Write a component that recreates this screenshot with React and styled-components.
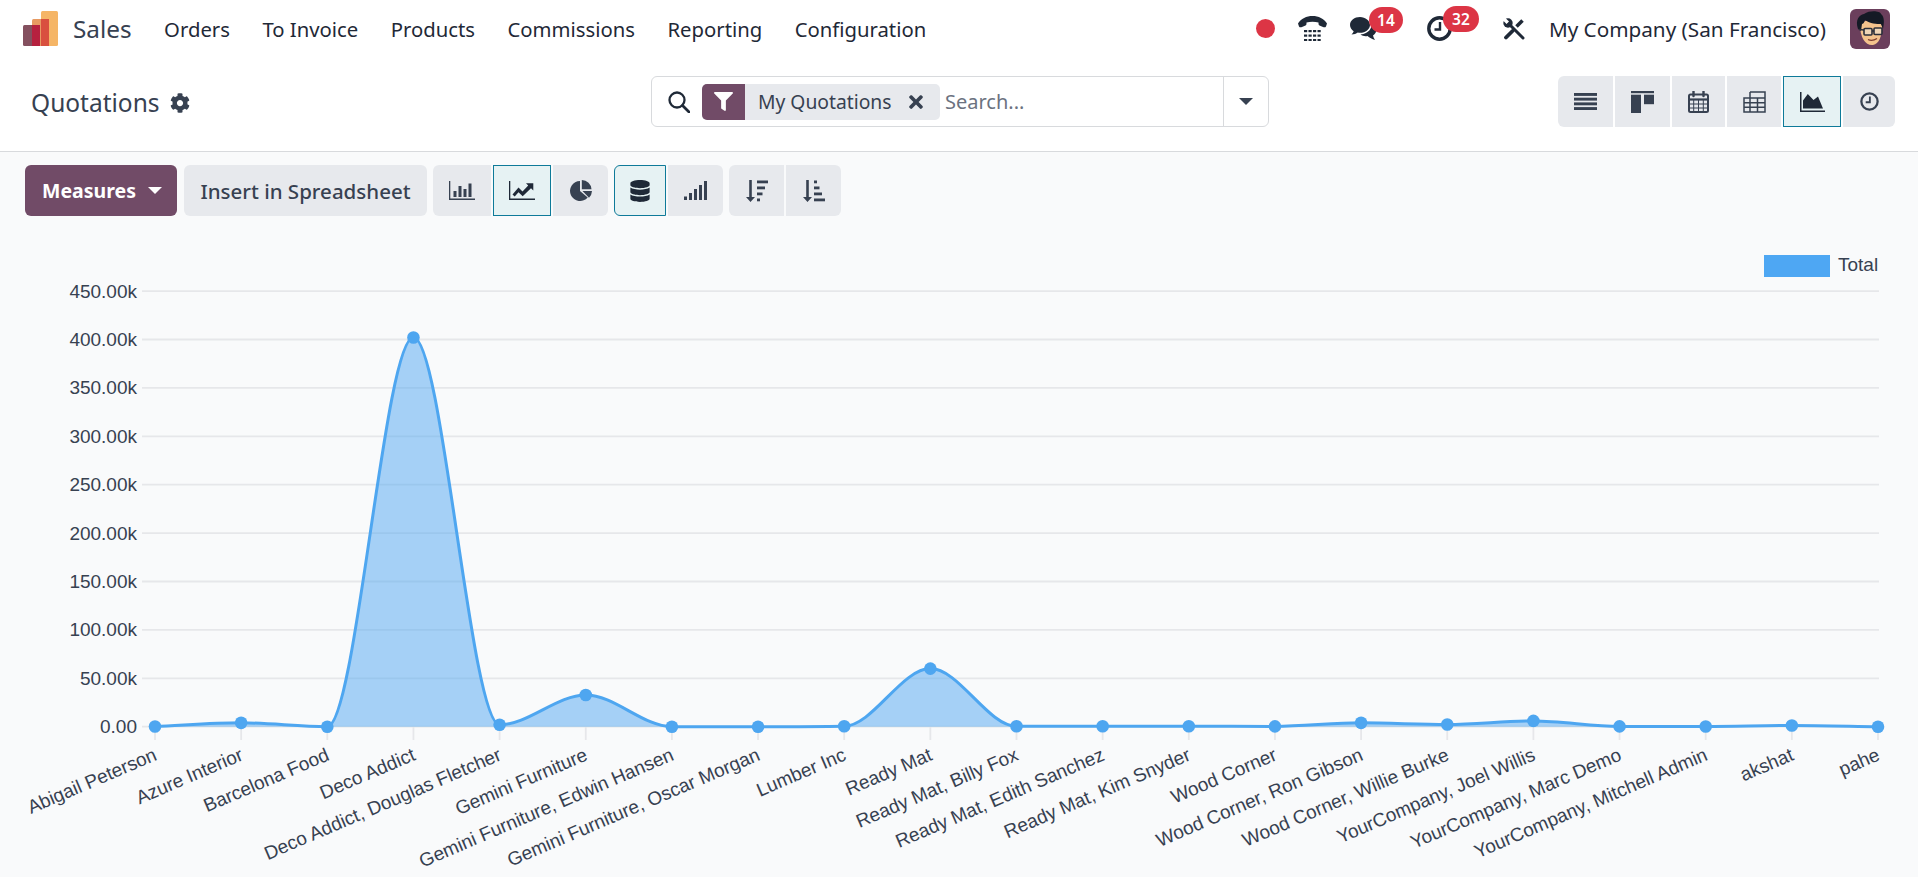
import React from "react";
import styled, { createGlobalStyle } from "styled-components";
import { FaDatabase, FaFilter, FaTimes, FaCog } from "react-icons/fa";

const Global = createGlobalStyle`
  html, body { margin: 0; padding: 0; height: 100%; overflow: hidden; background: #f9fafb; }
  #root { height: 100%; }
  * { box-sizing: border-box; }
`;

const Page = styled.div`
  width: 1918px; height: 877px; display: flex; flex-direction: column; overflow: hidden;
  font-family: "Noto Sans", "Open Sans", sans-serif; color: #374151; background: #f9fafb;
`;
const Navbar = styled.header`
  height: 57px; background: #fff; display: flex; align-items: center; justify-content: space-between;
  padding: 0 28px 0 23px; flex: none;
`;
const NavLeft = styled.nav`display: flex; align-items: center; gap: 32.5px;`;
const Brand = styled.div`display: flex; align-items: center; gap: 15px;`;
const BrandName = styled.span`font-size: 24.3px; color: #374151; line-height: 1; padding-top: 1px;`;
const NavLink = styled.a`font-size: 20.3px; color: #1f2937; line-height: 1; padding-top: 2px;`;
const NavRight = styled.div`display: flex; align-items: center;`;
const Slot = styled.div`
  position: relative; display: flex; align-items: center; margin-left: ${p => p.$ml || 0}px; color: #1f2937;
`;
const Badge = styled.span`
  position: absolute; left: ${p => p.$left}px; top: -10px; width: ${p => p.$w}px; height: 26px; border-radius: 13px;
  background: #dc3545; color: #fff; font-size: 15.5px; font-weight: 600; display: flex; align-items: center; justify-content: center;
`;
const Dot = styled.span`width: 19px; height: 19px; border-radius: 50%; background: #dc3545;`;
const CompanyName = styled.span`font-size: 20.7px; color: #1f2937; margin-left: 24px; line-height: 1; padding-top: 2px; white-space: nowrap;`;

const ControlPanel = styled.section`
  height: 95px; background: #fff; border-bottom: 1px solid #d8dadd; flex: none;
  display: grid; grid-template-columns: 620px 618px 1fr; align-items: start; padding: 19px 23px 0 31px;
`;
const Title = styled.div`display: flex; align-items: center; gap: 10px; height: 53px; font-size: 24.5px; color: #374151;`;
const SearchBox = styled.div`
  height: 51px; border: 1px solid #d8dadd; border-radius: 6px; display: flex; align-items: center; background: #fff;
`;
const SearchGlyph = styled.span`display: flex; width: 50px; justify-content: center; padding-left: 4px; color: #1f2937;`;
const Facet = styled.div`
  height: 36px; width: 238px; border-radius: 5px; background: #e7e9ed; display: flex; align-items: center; overflow: hidden; flex: none;
`;
const FacetIcon = styled.span`
  width: 43px; height: 36px; background: #714b67; color: #fff; display: flex; align-items: center; justify-content: center; flex: none;
`;
const FacetLabel = styled.span`font-size: 19.3px; color: #374151; margin-left: 13px; flex: 1; line-height: 1;`;
const FacetClose = styled.span`display: flex; margin-right: 14px; color: #374151;`;
const Placeholder = styled.span`flex: 1; margin-left: 5px; font-size: 20px; color: #6b7280; line-height: 1;`;
const DropToggle = styled.div`
  width: 45px; height: 49px; border-left: 1px solid #d8dadd; display: flex; align-items: center; justify-content: center; flex: none;
`;
const Caret = styled.span`
  display: block; width: 0; height: 0; border-left: 7px solid transparent; border-right: 7px solid transparent;
  border-top: 7px solid ${p => p.$color || "#374151"}; margin-left: ${p => p.$ml || 0}px;
`;
const Switcher = styled.div`display: flex; justify-content: flex-end; gap: 2px;`;
const Group = styled.div`display: flex; gap: 2px; margin-right: ${p => p.$mr ?? 6}px;`;
const IconBtn = styled.button`
  width: ${p => p.$w}px; height: 51px; padding: 0; margin: 0; display: flex; align-items: center; justify-content: center;
  background: ${p => (p.$active ? "#e6f2f3" : "#e7e9ed")};
  border: ${p => (p.$active ? "1.5px solid #0e7a99" : "none")};
  color: ${p => (p.$active ? "#1f2937" : "#374151")};
  border-radius: 0;
  &:first-child { border-top-left-radius: 6px; border-bottom-left-radius: 6px; }
  &:last-child { border-top-right-radius: 6px; border-bottom-right-radius: 6px; }
`;

const Content = styled.main`flex: 1; background: #f9fafb; min-height: 0;`;
const Toolbar = styled.div`display: flex; padding: 13px 25px 0; height: 64px; align-items: flex-start;`;
const MeasuresBtn = styled.button`
  width: 152px; height: 51px; background: #714b67; border: none; border-radius: 6px; color: #fff;
  font: 700 19.5px "Noto Sans", sans-serif; display: flex; align-items: center; padding: 0 0 0 17px; margin-right: 7px;
`;
const SheetBtn = styled.button`
  width: 243px; height: 51px; background: #e7e9ed; border: none; border-radius: 6px; color: #374151;
  font: 500 20.5px "Noto Sans", sans-serif; padding: 0; margin-right: 6px;
`;
const ChartSvg = styled.svg`display: block; width: 1918px; height: 661px;`;
const AxisText = styled.text`font: 19px "Liberation Sans", Arial, sans-serif; fill: #374151;`;

/* ---------- drawn icons ---------- */
const Logo = () => (
  <svg width="35" height="35" viewBox="0 0 35 35">
    <rect x="18" y="0" width="17" height="35" rx="1.5" fill="#f5b566" />
    <rect x="9" y="8" width="17" height="27" rx="1.5" fill="#e79a62" />
    <rect x="18" y="8" width="8" height="27" fill="#d9503f" />
    <rect x="0" y="14" width="17" height="21" rx="1.5" fill="#84505f" />
    <rect x="9" y="14" width="8" height="21" fill="#b6213f" />
  </svg>
);
const SearchIcon = () => (
  <svg width="22" height="22" viewBox="0 0 22 22" fill="none" stroke="currentColor">
    <circle cx="9" cy="9" r="7.500" strokeWidth="2.300" />
    <path d="M14.500 14.500L21 21" strokeWidth="2.800" strokeLinecap="round" />
  </svg>
);
const Phone = () => (
  <svg width="29" height="25" viewBox="0 0 29 25" fill="currentColor">
    <path d="M0 7.5C3 2.5 8.5 0 14.5 0S26 2.5 29 7.500L28 10.500C27.500 11.500 26 11.500 25 11L21.500 9.500C20.500 9 20.500 8 20.500 6.500C17 5.500 12 5.500 8.500 6.500C8.500 8 8.500 9 7.500 9.500L4 11C3 11.500 1.500 11.500 1 10.500Z" />
    {[14, 18.5, 23].map(y =>
      [6, 10.500, 15, 19.500].map(x => <rect key={x + "-" + y} x={x} y={y} width="3.2" height="2.200" />)
    )}
  </svg>
);
const Chat = () => (
  <svg width="27" height="23" viewBox="0 0 27 23" fill="currentColor">
    <path d="M10 0C4.500 0 0 3.500 0 8C0 10.500 1.500 12.700 3.700 14.200C3.300 15.500 2.500 16.500 1.500 17.500C4 17.500 6.300 16.500 7.800 15.500C8.500 15.700 9.300 15.800 10 15.800C15.500 15.800 20 12.300 20 8S15.500 0 10 0Z" />
    <path d="M21.500 7C22 11 19 16.500 10.500 17.500C12.500 19 15 19.500 17.500 19C19.500 20.800 22 22 25 23C24 21.500 23.300 20 23 18.500C25.300 17 26.500 15 26.500 12.800C26.500 10.500 24.500 8 21.500 7Z" />
  </svg>
);
const Clock = ({ size = 25, sw = 3.4 }) => (
  <svg width={size} height={size} viewBox="0 0 25 25" fill="none" stroke="currentColor">
    <circle cx="12.5" cy="12.500" r="10.700" strokeWidth={sw} />
    <path d="M13 6V13.500H7.500" strokeWidth="2.400" />
  </svg>
);
const Tools = () => (
  <svg width="22" height="22" viewBox="0 0 22 22">
    <path d="M3 19.500L9.500 13" stroke="currentColor" strokeWidth="3.800" strokeLinecap="round" />
    <path d="M13.500 8.500L19.500 2.500" stroke="currentColor" strokeWidth="3.600" />
    <circle cx="5" cy="5" r="4.700" fill="currentColor" />
    <path d="M0.500 0.500L4.800 4.800" stroke="#fff" strokeWidth="3.400" />
    <path d="M6 6L20 20" stroke="currentColor" strokeWidth="3" strokeLinecap="round" />
  </svg>
);
const Avatar = () => (
  <svg width="40" height="40" viewBox="0 0 40 40">
    <rect width="40" height="40" rx="6" fill="#6b3f5c" />
    <path d="M10 16C10 29 16 37 23 36C29 35 32 27 32 17C30 11 14 9 10 16Z" fill="#f4c38d" />
    <path d="M8 20C5 11 9 6 14 5C20 1 30 2 31 5C35 8 34 15 33 20L31 15C27 15 20 15 15 11C14 14 13 15 12 15L11 22Z" fill="#141a25" />
    <rect x="14" y="19.500" width="8" height="6.500" rx="1" fill="#e9e4d8" fillOpacity=".55" stroke="#2b2f3a" strokeWidth="1.600" />
    <rect x="24" y="19" width="8" height="6.500" rx="1" fill="#e9e4d8" fillOpacity=".55" stroke="#2b2f3a" strokeWidth="1.600" />
    <path d="M22 22H24M9 20.500L14 21" stroke="#2b2f3a" strokeWidth="1.500" />
    <path d="M18 30.500C21 32 24 31.500 27 29.500" stroke="#7a3c2f" strokeWidth="1.300" fill="none" />
  </svg>
);
const ListIcon = () => (
  <svg width="23" height="17" viewBox="0 0 23 17" fill="currentColor">
    {[0, 4.700, 9.400, 14.100].map(y => <rect key={y} y={y} width="23" height="2.900" />)}
  </svg>
);
const KanbanIcon = () => (
  <svg width="23" height="22" viewBox="0 0 23 22" fill="currentColor">
    <rect width="23" height="2.200" /><rect y="3.700" width="10" height="18.300" /><rect x="13" y="3.700" width="10" height="9.500" />
  </svg>
);
const CalendarIcon = () => (
  <svg width="21" height="22" viewBox="0 0 21 22" fill="none" stroke="currentColor">
    <rect x="1" y="3.500" width="19" height="17.500" rx="1.500" strokeWidth="2" />
    <path d="M1 8.500H20" strokeWidth="2.200" />
    <path d="M1 13H20M1 17H20M5.700 8.500V21M10.500 8.500V21M15.300 8.500V21" strokeWidth="1" />
    <path d="M5.500 0.500V5M15.500 0.500V5" strokeWidth="2.400" strokeLinecap="round" />
  </svg>
);
const TableIcon = () => (
  <svg width="23" height="22" viewBox="0 0 23 22" fill="none" stroke="currentColor" strokeWidth="1.500">
    <path d="M7 1H22V21H1V7H22M1 11.700H22M1 16.300H22M7 1V21M14.500 7V21" />
  </svg>
);
const AreaIcon = () => (
  <svg width="25" height="20" viewBox="0 0 25 20" fill="currentColor">
    <path d="M0 0H1.500V18.500H25V20H0Z" />
    <path d="M3 16.500V8.500L7.800 2L13.500 8L18 4.500L23 16.500Z" />
  </svg>
);
const BarIcon = () => (
  <svg width="26" height="19" viewBox="0 0 26 19" fill="currentColor">
    <path d="M0 0H1.300V17.500H26V19H0Z" />
    <rect x="4.500" y="10" width="3" height="6" /><rect x="9.500" y="5" width="3" height="11" /><rect x="14.500" y="8" width="3" height="8" /><rect x="19.500" y="2.500" width="3" height="13.500" />
  </svg>
);
const LineIcon = () => (
  <svg width="26" height="19" viewBox="0 0 26 19" fill="currentColor">
    <path d="M0 0H1.300V17.500H26V19H0Z" />
    <path d="M3.500 13.500L9.500 6.500L13.500 10.500L19.200 4.500L17 2.300H24.300V9.500L22 7.200L13.700 15.200L9.500 11.200L5.700 15.500Z" />
  </svg>
);
const PieIcon = () => (
  <svg width="22" height="21" viewBox="0 0 22 21" fill="currentColor">
    <path d="M10 11V1A10 10 0 1 0 17.700 17.400Z" />
    <path d="M11.800 9.300V0A9.700 9.700 0 0 1 21.500 9.300Z" />
    <path d="M12.500 11H22A10 10 0 0 1 19 17.700Z" />
  </svg>
);
const SignalIcon = () => (
  <svg width="23" height="19" viewBox="0 0 23 19" fill="currentColor">
    <rect y="15.500" width="3" height="3.500" /><rect x="5" y="12" width="3" height="7" /><rect x="10" y="8" width="3" height="11" /><rect x="15" y="4" width="3" height="15" /><rect x="20" y="0" width="3" height="19" />
  </svg>
);
const SortDesc = () => (
  <svg width="22" height="22" viewBox="0 0 22 22" fill="currentColor">
    <path d="M3.200 0H5.800V17H9L4.500 22L0 17H3.200Z" />
    <rect x="11" y="0.500" width="11" height="2.800" /><rect x="11" y="6.500" width="8" height="2.800" /><rect x="11" y="12.500" width="5.500" height="2.800" /><rect x="11" y="18.500" width="3" height="2.800" />
  </svg>
);
const SortAsc = () => (
  <svg width="22" height="22" viewBox="0 0 22 22" fill="currentColor">
    <path d="M3.200 0H5.800V17H9L4.500 22L0 17H3.200Z" />
    <rect x="11" y="0.500" width="3" height="2.800" /><rect x="11" y="6.500" width="5.500" height="2.800" /><rect x="11" y="12.500" width="8" height="2.800" /><rect x="11" y="18.500" width="11" height="2.800" />
  </svg>
);

/* ---------- chart ---------- */
const DATA = [
  ["Abigail Peterson", 200], ["Azure Interior", 4000], ["Barcelona Food", 0], ["Deco Addict", 402000],
  ["Deco Addict, Douglas Fletcher", 2000], ["Gemini Furniture", 32800], ["Gemini Furniture, Edwin Hansen", 0],
  ["Gemini Furniture, Oscar Morgan", 0], ["Lumber Inc", 500], ["Ready Mat", 60000], ["Ready Mat, Billy Fox", 500],
  ["Ready Mat, Edith Sanchez", 500], ["Ready Mat, Kim Snyder", 500], ["Wood Corner", 300], ["Wood Corner, Ron Gibson", 4000],
  ["Wood Corner, Willie Burke", 2300], ["YourCompany, Joel Willis", 6000], ["YourCompany, Marc Demo", 300],
  ["YourCompany, Mitchell Admin", 200], ["akshat", 1200], ["pahe", 0],
];
const X0 = 155, DX = 86.15, Y0 = 726.7, PER = 48.4 / 50000;
const PTS = DATA.map(([, v], i) => [X0 + i * DX, Y0 - v * PER]);

function monotonePath(pts) {
  const n = pts.length;
  const d = [];
  for (let i = 0; i < n - 1; i++) d.push((pts[i + 1][1] - pts[i][1]) / (pts[i + 1][0] - pts[i][0]));
  const m = pts.map((_, i) => {
    if (i === 0) return d[0];
    if (i === n - 1) return d[n - 2];
    return d[i - 1] * d[i] <= 0 ? 0 : (d[i - 1] + d[i]) / 2;
  });
  for (let i = 0; i < n - 1; i++) {
    if (d[i] === 0) { m[i] = m[i + 1] = 0; continue; }
    const a = m[i] / d[i], b = m[i + 1] / d[i], s = a * a + b * b;
    if (s > 9) { const t = 3 / Math.sqrt(s); m[i] = a * t * d[i]; m[i + 1] = b * t * d[i]; }
  }
  let p = `M${pts[0][0]} ${pts[0][1]}`;
  for (let i = 0; i < n - 1; i++) {
    const h = (pts[i + 1][0] - pts[i][0]) / 3;
    p += `C${pts[i][0] + h} ${pts[i][1] + m[i] * h} ${pts[i + 1][0] - h} ${pts[i + 1][1] - m[i + 1] * h} ${pts[i + 1][0]} ${pts[i + 1][1]}`;
  }
  return p;
}
const LINE = monotonePath(PTS);
const YTICKS = ["0.00", "50.00k", "100.00k", "150.00k", "200.00k", "250.00k", "300.00k", "350.00k", "400.00k", "450.00k"];

const Chart = () => (
  <ChartSvg viewBox="0 216 1918 661">
    {YTICKS.map((t, i) => {
      const y = Y0 - i * 48.4;
      return (
        <g key={t}>
          <line x1="142" x2="1879" y1={y} y2={y} stroke="#e6e7ea" strokeWidth="1.800" />
          <AxisText x="137" y={y} textAnchor="end" dominantBaseline="central">{t}</AxisText>
        </g>
      );
    })}
    {PTS.map(([x]) => <line key={x} x1={x} x2={x} y1={Y0} y2="740" stroke="#e6e7ea" strokeWidth="1.800" />)}
    <path d={`${LINE}L${PTS[20][0]} ${Y0}L${PTS[0][0]} ${Y0}Z`} fill="rgba(78,166,240,.49)" />
    <path d={LINE} fill="none" stroke="#4ea6f0" strokeWidth="3" />
    {PTS.map(([x, y]) => <circle key={x} cx={x} cy={y} r="6.300" fill="#4ea6f0" />)}
    {DATA.map(([name], i) => (
      <AxisText key={name} x={X0 + i * DX + 0.5} y="753.5" textAnchor="end" dominantBaseline="central"
        transform={`rotate(-23.2 ${X0 + i * DX + 0.5} 753.5)`}>{name}</AxisText>
    ))}
    <rect x="1764" y="255" width="66" height="22" fill="#4ea7f3" />
    <AxisText x="1838" y="264" dominantBaseline="central">Total</AxisText>
  </ChartSvg>
);

export default function App() {
  return (
    <Page>
      <Global />
      <Navbar>
        <NavLeft>
          <Brand><Logo /><BrandName>Sales</BrandName></Brand>
          {["Orders", "To Invoice", "Products", "Commissions", "Reporting", "Configuration"].map(t => <NavLink key={t}>{t}</NavLink>)}
        </NavLeft>
        <NavRight>
          <Slot><Dot /></Slot>
          <Slot $ml={23}><Phone /></Slot>
          <Slot $ml={23}><Chat /><Badge $left={19} $w={34}>14</Badge></Slot>
          <Slot $ml={50}><Clock /><Badge $left={16} $w={36}>32</Badge></Slot>
          <Slot $ml={51}><Tools /></Slot>
          <CompanyName>My Company (San Francisco)</CompanyName>
          <Slot $ml={24}><Avatar /></Slot>
        </NavRight>
      </Navbar>
      <ControlPanel>
        <Title>Quotations <FaCog size={20} /></Title>
        <SearchBox>
          <SearchGlyph><SearchIcon /></SearchGlyph>
          <Facet>
            <FacetIcon><FaFilter size={19} /></FacetIcon>
            <FacetLabel>My Quotations</FacetLabel>
            <FacetClose><FaTimes size={20} /></FacetClose>
          </Facet>
          <Placeholder>Search...</Placeholder>
          <DropToggle><Caret /></DropToggle>
        </SearchBox>
        <Switcher>
          <IconBtn $w={55}><ListIcon /></IconBtn>
          <IconBtn $w={55}><KanbanIcon /></IconBtn>
          <IconBtn $w={53}><CalendarIcon /></IconBtn>
          <IconBtn $w={54}><TableIcon /></IconBtn>
          <IconBtn $w={58} $active><AreaIcon /></IconBtn>
          <IconBtn $w={52}><Clock size={19} sw={3} /></IconBtn>
        </Switcher>
      </ControlPanel>
      <Content>
        <Toolbar>
          <MeasuresBtn>Measures<Caret $color="#fff" $ml={12} /></MeasuresBtn>
          <SheetBtn>Insert in Spreadsheet</SheetBtn>
          <Group>
            <IconBtn $w={58}><BarIcon /></IconBtn>
            <IconBtn $w={58} $active><LineIcon /></IconBtn>
            <IconBtn $w={55}><PieIcon /></IconBtn>
          </Group>
          <Group>
            <IconBtn $w={52} $active><FaDatabase size={22} /></IconBtn>
            <IconBtn $w={55}><SignalIcon /></IconBtn>
          </Group>
          <Group $mr={0}>
            <IconBtn $w={55}><SortDesc /></IconBtn>
            <IconBtn $w={55}><SortAsc /></IconBtn>
          </Group>
        </Toolbar>
        <Chart />
      </Content>
    </Page>
  );
}
